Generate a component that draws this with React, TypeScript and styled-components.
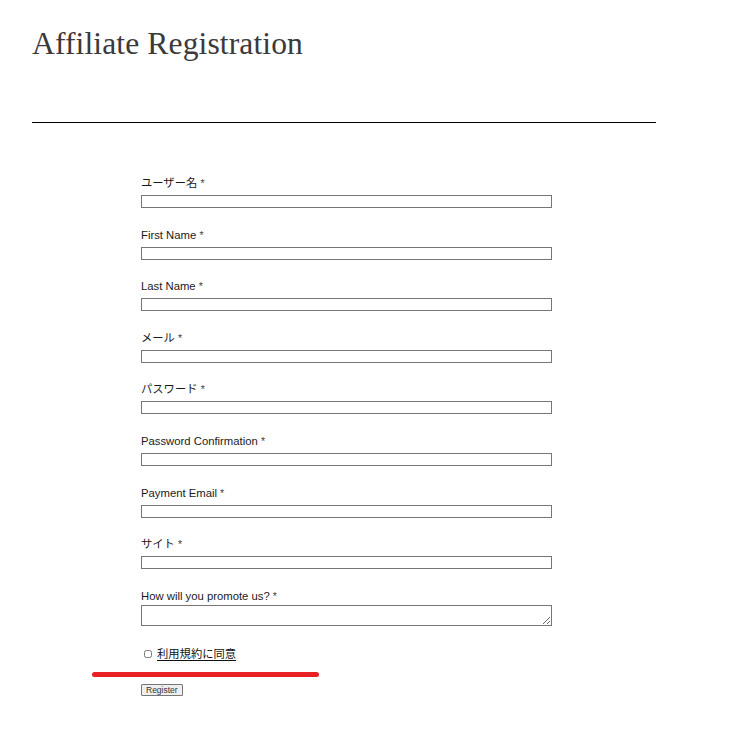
import styled, { createGlobalStyle } from "styled-components"

const GlobalStyle = createGlobalStyle`
    html, body {
        margin: 0;
        padding: 0;
        background: #ffffff;
    }
    body {
        font-family: "Liberation Sans", "Noto Sans CJK JP", sans-serif;
        color: #111;
    }
`

const fields = [
    { label: 'ユーザー名', type: 'text' },
    { label: 'First Name', type: 'text' },
    { label: 'Last Name', type: 'text' },
    { label: 'メール', type: 'email' },
    { label: 'パスワード', type: 'password' },
    { label: 'Password Confirmation', type: 'password' },
    { label: 'Payment Email', type: 'email' },
    { label: 'サイト', type: 'url' },
]

const Page = styled.div`
    padding: 22px 0 40px 32px;
    width: 624px;
`

const Title = styled.h1`
    margin: 0;
    font-family: "Liberation Serif", "Noto Sans CJK JP", serif;
    font-weight: normal;
    font-size: 31.6px;
    line-height: 44px;
    color: #3a3a3a;
    letter-spacing: 0.1px;
`

const Rule = styled.hr`
    margin: 56px 0 0 0;
    border: none;
    border-top: 1.5px solid #000;
    height: 0;
`

const Form = styled.form`
    position: relative;
    margin: 52px 0 0 109px;
    width: 411px;
    display: flex;
    flex-direction: column;
`

const Field = styled.div<{ $gap: number }>`
    display: flex;
    flex-direction: column;
    margin-bottom: ${p => p.$gap}px;
`

const Label = styled.label`
    font-size: 11.3px;
    line-height: 16px;
    color: #1a1a1a;
`

const Star = styled.span`
    color: #444;
    font-size: 10.5px;
`

const Input = styled.input`
    box-sizing: border-box;
    margin: 4px 0 0 0;
    width: 411px;
    height: 13px;
    padding: 0 2px;
    border: 1px solid #767676;
    border-radius: 0;
    outline: none;
    font-size: 10px;
`

const TextArea = styled.textarea`
    box-sizing: border-box;
    display: block;
    margin: 1px 0 0 0;
    width: 411px;
    height: 21px;
    padding: 0 2px;
    border: 1px solid #767676;
    border-radius: 0;
    outline: none;
    font-size: 10px;
`

const AgreeRow = styled.div`
    display: flex;
    align-items: center;
    gap: 5px;
    margin: 20px 0 0 3px;
`

const Check = styled.input`
    margin: 0;
    width: 8px;
    height: 8px;
`

const AgreeLink = styled.a`
    font-size: 11.3px;
    line-height: 16px;
    color: #111;
    text-decoration: underline;
    text-underline-offset: 2px;
`

const Marker = styled.div`
    position: absolute;
    left: -49px;
    bottom: 19px;
    width: 227px;
    height: 5px;
    border-radius: 3px;
    background: #e82222;
`

const RegisterButton = styled.button`
    align-self: flex-start;
    margin-top: 22px;
    box-sizing: border-box;
    height: 12px;
    padding: 0 4px;
    font-family: "Liberation Sans", sans-serif;
    font-size: 8.5px;
    line-height: 10px;
    color: #333;
    background: #efefef;
    border: 1px solid #767676;
    border-radius: 1px;
`

const App = () => {
    return (
        <Page>
            <GlobalStyle />
            <Title>Affiliate Registration</Title>
            <Rule />
            <Form onSubmit={e => e.preventDefault()}>
                {fields.map(item => (
                    <Field key={item.label} $gap={18.6}>
                        <Label>{item.label} <Star>*</Star></Label>
                        <Input type={item.type} />
                    </Field>
                ))}
                <Field $gap={0}>
                    <Label>How will you promote us? <Star>*</Star></Label>
                    <TextArea />
                </Field>
                <AgreeRow>
                    <Check type="checkbox" />
                    <AgreeLink href="#">利用規約に同意</AgreeLink>
                </AgreeRow>
                <RegisterButton type="submit">Register</RegisterButton>
                <Marker />
            </Form>
        </Page>
    )
}

export default App
